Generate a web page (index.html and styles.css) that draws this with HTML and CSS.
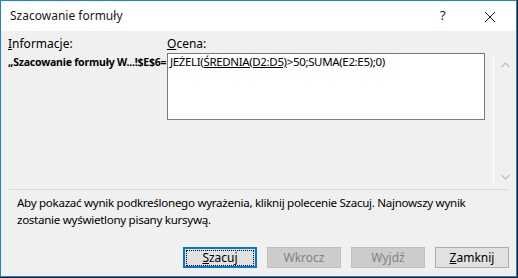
FILE: index.html
```html
<html>

<head>
  <meta charset="utf-8" />
  <meta name="viewport" content="width=device-width, initial-scale=1" />
  <title>Szacowanie formuły</title>
  <link rel="stylesheet" href="styles.css">
</head>

<body>
  <div class="window">
    <div class="titlebar">
      <div class="title">Szacowanie formuły</div>
      <div class="help">?</div>
      <div class="close">
        <svg width="12" height="12" viewBox="0 0 12 12">
          <path d="M1 1 L11 11 M11 1 L1 11" stroke="#1a1a1a" stroke-width="1" fill="none" />
        </svg>
      </div>
    </div>

    <div class="content">
      <div class="eval">
        <div class="lbl"><u>I</u>nformacje:</div>
        <div class="lbl"><u>O</u>cena:</div>
        <div class="scroll">
          <svg class="arrow" width="9" height="6" viewBox="0 0 9 6">
            <path d="M0.5 5 L4.5 1 L8.5 5" stroke="#c4c4c4" stroke-width="1.5" fill="none" />
          </svg>
          <svg class="arrow" width="9" height="6" viewBox="0 0 9 6">
            <path d="M0.5 1 L4.5 5 L8.5 1" stroke="#c4c4c4" stroke-width="1.5" fill="none" />
          </svg>
        </div>
        <div class="ref">„Szacowanie formuły W...!$E$6=</div>
        <div class="formula">JEŻELI(<span class="cur">ŚREDNIA(D2:D5)</span>&gt;50;SUMA(E2:E5);0)</div>
      </div>

      <div class="sep"></div>

      <p class="hint">Aby pokazać wynik podkreślonego wyrażenia, kliknij polecenie Szacuj. Najnowszy wynik<br />zostanie wyświetlony pisany kursywą.</p>

      <div class="buttons">
        <button class="btn default"><span class="focus"><u>S</u>zacuj</span></button>
        <button class="btn" disabled>Wkrocz</button>
        <button class="btn" disabled>Wyjdź</button>
        <button class="btn"><u>Z</u>amknij</button>
      </div>
    </div>
  </div>
</body>

</html>
```

FILE: styles.css
```css
body {
  margin: 0;
  background: #1e1e1e;
  font: 12px "Segoe UI", "Noto Sans", sans-serif;
  color: #000;
}

.window {
  width: 515px;
  height: 275px;
  border: 1px solid #1883d7;
  background: #f0f0f0;
  display: flex;
  flex-direction: column;
}

.titlebar {
  height: 30px;
  background: #fff;
  display: flex;
  align-items: center;
}

.title {
  flex: 1;
  padding-left: 9px;
  padding-bottom: 2px;
  font-size: 12px;
  color: #1a1a1a;
}

.help {
  width: 20px;
  margin-right: 24px;
  font-size: 13px;
  color: #1a1a1a;
  padding-bottom: 2px;
}

.close {
  width: 26px;
  padding-top: 2px;
  margin-right: 6px;
}

.content {
  flex: 1;
  display: flex;
  flex-direction: column;
}

.eval {
  display: grid;
  grid-template-columns: 159px 318px 1fr;
  grid-template-rows: 17px 133px;
  margin: 5px 0 0 7px;
}

.lbl {
  font-size: 12px;
  line-height: 16px;
}

.ref {
  font-weight: bold;
  font-size: 10.5px;
  padding-top: 2px;
  letter-spacing: -0.2px;
  white-space: nowrap;
}

.formula {
  height: 63px;
  border: 1px solid #7a7a7a;
  background: #fff;
  padding: 1px 2px;
  font-size: 11.5px;
  letter-spacing: -0.35px;
  line-height: 14px;
}

.cur {
  text-decoration: underline;
}

.scroll {
  grid-row: 1 / 3;
  grid-column: 3;
  margin: 18px 0 0 8px;
  border-left: 1px solid #fff;
  display: flex;
  flex-direction: column;
  justify-content: space-between;
  padding: 8px 0 6px 7px;
}

.sep {
  margin: 3px 8px 0 8px;
  border-top: 1px solid #d9d9d9;
}

.hint {
  margin: 4px 0 0 16px;
  font-size: 11.6px;
  line-height: 17px;
  letter-spacing: -0.3px;
}

.buttons {
  display: flex;
  gap: 10px;
  margin: 19px 0 0 182px;
}

.btn {
  width: 74px;
  height: 21px;
  padding: 0;
  border: 1px solid #adadad;
  background: #e1e1e1;
  font: 12px "Segoe UI", "Noto Sans", sans-serif;
  color: #000;
}

.btn[disabled] {
  background: #cccccc;
  border-color: #bfbfbf;
  color: #838383;
}

.btn.default {
  border: 2px solid #0078d7;
}

.focus {
  display: block;
  margin: 1px;
  border: 1px dotted #000;
  line-height: 14px;
}
```
